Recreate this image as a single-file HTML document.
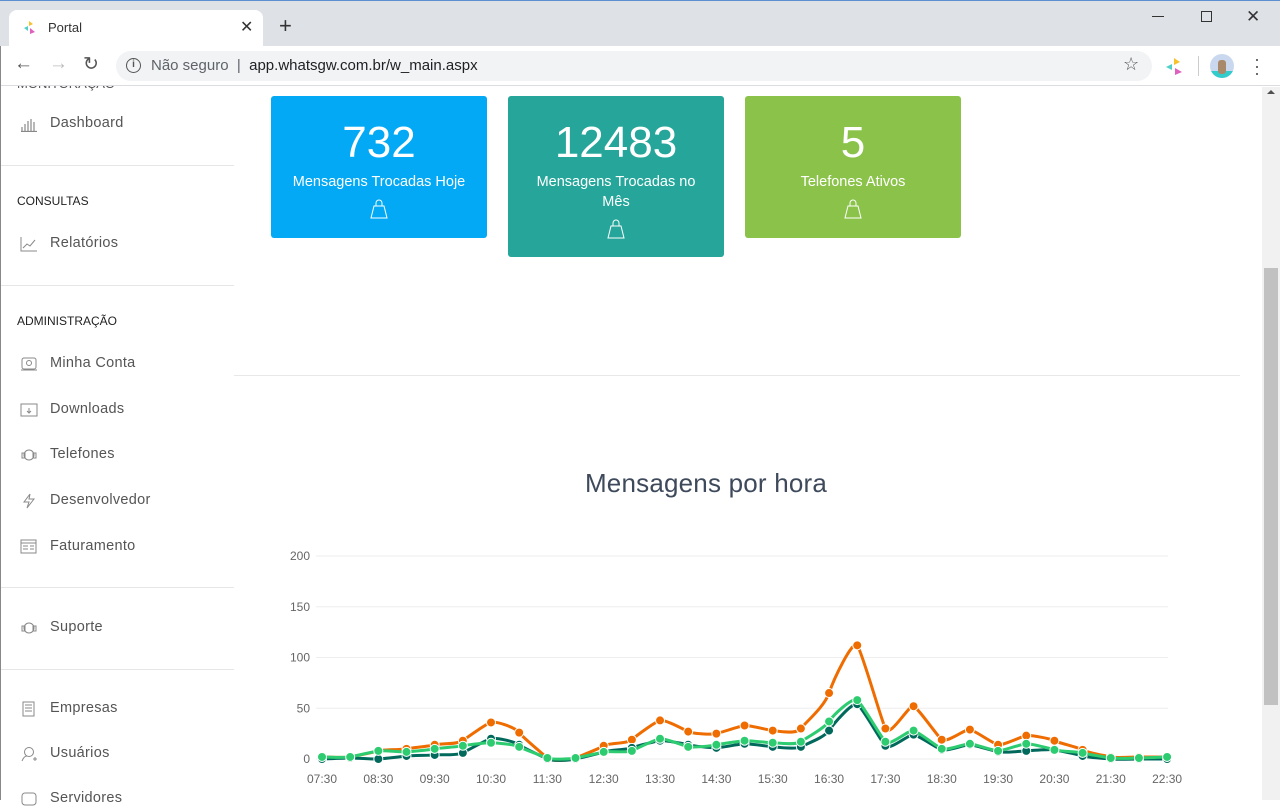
<!DOCTYPE html>
<html><head><meta charset="utf-8"><style>
*{box-sizing:border-box;margin:0;padding:0}
body{width:1280px;height:800px;overflow:hidden;font-family:"Liberation Sans",sans-serif;background:#fff;position:relative}
.abs{position:absolute}
.side a{position:absolute;left:50px;font-size:14.5px;color:#555;letter-spacing:0.3px}
.side .ic{position:absolute;left:20px;width:18px;height:16px}
.side h4{position:absolute;left:17px;font-size:12px;font-weight:normal;color:#222}
.side hr{position:absolute;left:0;width:234px;border:0;border-top:1px solid #e6e6e6}
.card{position:absolute;color:#fff;text-align:center;border-radius:3px}
.card .n{font-size:44px;margin-top:22px;line-height:50px}
.card .t{font-size:14.5px;line-height:20px;margin-top:4px}
.card svg{margin-top:6px}
</style></head><body>
<div class="side">
<svg class="ic" style="top:116px" width="18" height="16"><g stroke="#888" stroke-width="1.2"><path d="M2 15V11M5 15V8M8 15V5M11 15V3M14 15V6M1 15.5H17"/></g></svg>
<a style="top:115px">Dashboard</a>
<hr style="top:165px">
<h4 style="top:194px">CONSULTAS</h4>
<svg class="ic" style="top:236px" width="18" height="16"><path d="M1 1V15H17M3 12L7 8L10 10L15 4" stroke="#888" fill="none"/></svg>
<a style="top:235px">Relatórios</a>
<hr style="top:285px">
<h4 style="top:314px">ADMINISTRAÇÃO</h4>
<svg class="ic" style="top:356px" width="18" height="16"><rect x="2" y="2" width="14" height="11" rx="2" stroke="#888" fill="none"/><circle cx="9" cy="7" r="2.5" stroke="#888" fill="none"/><path d="M1 14H17" stroke="#888"/></svg>
<a style="top:355px">Minha Conta</a>
<svg class="ic" style="top:402px" width="18" height="16"><rect x="1" y="2" width="16" height="12" stroke="#888" fill="none"/><path d="M9 6V11M7 9L9 11L11 9" stroke="#888" fill="none"/></svg>
<a style="top:401px">Downloads</a>
<svg class="ic" style="top:447px" width="18" height="16"><circle cx="9" cy="8" r="5" stroke="#888" fill="none"/><rect x="2" y="6" width="3" height="5" stroke="#888" fill="none"/><rect x="13" y="6" width="3" height="5" stroke="#888" fill="none"/></svg>
<a style="top:446px">Telefones</a>
<svg class="ic" style="top:493px" width="18" height="16"><path d="M10 1L4 9H9L7 15L14 6H9Z" stroke="#888" fill="none"/></svg>
<a style="top:492px">Desenvolvedor</a>
<svg class="ic" style="top:539px" width="18" height="16"><rect x="1" y="1" width="15" height="13" stroke="#888" fill="none"/><path d="M1 4H16M3 7H8M10 7H14M3 10H8M10 10H14" stroke="#888"/></svg>
<a style="top:538px">Faturamento</a>
<hr style="top:587px">
<svg class="ic" style="top:620px" width="18" height="16"><circle cx="9" cy="8" r="5" stroke="#888" fill="none"/><rect x="2" y="6" width="3" height="5" stroke="#888" fill="none"/><rect x="13" y="6" width="3" height="5" stroke="#888" fill="none"/></svg>
<a style="top:619px">Suporte</a>
<hr style="top:669px">
<svg class="ic" style="top:701px" width="18" height="16"><rect x="3" y="1" width="11" height="14" stroke="#888" fill="none"/><path d="M5 4H12M5 7H12M5 10H12" stroke="#888"/></svg>
<a style="top:700px">Empresas</a>
<svg class="ic" style="top:746px" width="18" height="16"><circle cx="9" cy="6" r="4.5" stroke="#888" fill="none"/><path d="M2 15Q4 10 7 10M13 13H17M15 11V15" stroke="#888" fill="none"/></svg>
<a style="top:745px">Usuários</a>
<svg class="ic" style="top:792px" width="18" height="16"><rect x="2" y="1" width="14" height="12" rx="3" stroke="#888" fill="none"/></svg>
<a style="top:790px">Servidores</a>
</div>
<div class="abs" style="left:17px;top:76px;font-size:13px;color:#555">MONITORAÇÃO</div>
<div class="abs" style="left:0;top:0;width:1280px;height:46px;background:#dee1e6;border-top:1px solid #5b8fd1"></div>
<div class="abs" style="left:9px;top:10px;width:254px;height:36px;background:#fff;border-radius:8px 8px 0 0"></div>
<svg class="abs" style="left:22px;top:20px" width="16" height="16"><polygon points="7,1 11,4 7,6" fill="#f6c12b"/><polygon points="2,8 6,6 6,11" fill="#4fd0c8"/><polygon points="8,8 13,12 8,14" fill="#e060c0"/></svg>
<div class="abs" style="left:48px;top:20px;font-size:13px;color:#333">Portal</div>
<div class="abs" style="left:240px;top:17px;font-size:16px;color:#333">✕</div>
<div class="abs" style="left:279px;top:13px;font-size:22px;color:#333">+</div>
<div class="abs" style="left:1152px;top:16px;width:12px;border-top:1px solid #333"></div>
<div class="abs" style="left:1201px;top:11px;width:11px;height:11px;border:1px solid #333"></div>
<div class="abs" style="left:1246px;top:7px;font-size:17px;color:#333">✕</div>
<div class="abs" style="left:0;top:46px;width:1280px;height:40px;background:#fff;border-bottom:1px solid #dadce0"></div>
<div class="abs" style="left:14px;top:53px;font-size:19px;color:#555">←</div>
<div class="abs" style="left:49px;top:53px;font-size:19px;color:#bbb">→</div>
<div class="abs" style="left:83px;top:53px;font-size:19px;color:#555">↻</div>
<div class="abs" style="left:116px;top:51px;width:1036px;height:30px;background:#f1f3f4;border-radius:15px"></div>
<div class="abs" style="left:126px;top:58px;width:15px;height:15px;border:1.5px solid #555;border-radius:50%;font-size:10px;text-align:center;line-height:12px;color:#555;font-weight:bold">i</div>
<div class="abs" style="left:151px;top:57px;font-size:15px;color:#5f6368">Não seguro&nbsp;&nbsp;|&nbsp;&nbsp;<span style="color:#202124">app.whatsgw.com.br/w_main.aspx</span></div>
<div class="abs" style="left:1123px;top:54px;font-size:18px;color:#555">☆</div>
<svg class="abs" style="left:1165px;top:57px" width="20" height="20"><polygon points="9,1 15,5 9,8" fill="#f6c12b"/><polygon points="1,10 7,7 7,13" fill="#4fd0c8"/><polygon points="10,11 17,15 10,18" fill="#e060c0"/></svg>
<div class="abs" style="left:1198px;top:56px;height:20px;border-left:1px solid #ccc"></div>
<div class="abs" style="left:1210px;top:54px;width:24px;height:24px;border-radius:50%;background:#c9d8ee;overflow:hidden"><div style="position:absolute;bottom:0;width:24px;height:7px;background:#3cc"></div><div style="position:absolute;left:8px;top:6px;width:8px;height:14px;background:#a88a6a;border-radius:3px"></div></div>
<div class="abs" style="left:1254px;top:56px;font-size:18px;color:#555;line-height:7px">·<br>·<br>·</div>
<div class="abs" style="left:1262px;top:87px;width:18px;height:713px;background:#f1f1f1"></div>
<div class="abs" style="left:1264px;top:268px;width:14px;height:437px;background:#c1c1c1"></div>
<div class="abs" style="left:1267px;top:90px;width:0;height:0;border:4px solid transparent;border-bottom-color:#505050;border-top:0"></div>
<div class="abs" style="left:0;top:46px;width:1px;height:754px;background:#888"></div>
<div class="card" style="left:271px;top:96px;width:216px;height:142px;background:#03a9f4"><div class="n">732</div><div class="t">Mensagens Trocadas Hoje</div><svg width="20" height="22"><path d="M7 8V5a3 3 0 0 1 6 0V8M5 8H15L18 20H2Z" stroke="#fff" fill="none"/></svg></div>
<div class="card" style="left:508px;top:96px;width:216px;height:161px;background:#26a69a"><div class="n">12483</div><div class="t">Mensagens Trocadas no<br>Mês</div><svg width="20" height="22"><path d="M7 8V5a3 3 0 0 1 6 0V8M5 8H15L18 20H2Z" stroke="#fff" fill="none"/></svg></div>
<div class="card" style="left:745px;top:96px;width:216px;height:142px;background:#8bc34a"><div class="n">5</div><div class="t">Telefones Ativos</div><svg width="20" height="22"><path d="M7 8V5a3 3 0 0 1 6 0V8M5 8H15L18 20H2Z" stroke="#fff" fill="none"/></svg></div>
<div class="abs" style="left:234px;top:375px;width:1006px;border-top:1px solid #e8e8e8"></div>
<div class="abs" style="left:234px;top:468px;width:944px;text-align:center;font-size:26px;color:#3e4a5b;letter-spacing:0.2px">Mensagens por hora</div>
<svg id="ch" class="abs" style="left:0;top:0" width="1262" height="800"></svg>
<script>
var s=document.getElementById('ch'),h='';
var X=function(i){return 322+i*28.17},Y=function(v){return 759-v*1.015};
[0,50,100,150,200].forEach(function(v){h+='<line x1="316" x2="1168" y1="'+Y(v)+'" y2="'+Y(v)+'" stroke="#eee"/><text x="310" y="'+(Y(v)+4)+'" font-size="12" fill="#666" text-anchor="end" font-family="Liberation Sans">'+v+'</text>'});
var labs=['07:30','08:30','09:30','10:30','11:30','12:30','13:30','14:30','15:30','16:30','17:30','18:30','19:30','20:30','21:30','22:30'];
labs.forEach(function(l,k){h+='<text x="'+X(k*2)+'" y="783" font-size="12" fill="#666" text-anchor="middle" font-family="Liberation Sans">'+l+'</text>'});
var O=[2,2,8,10,14,18,36,26,1,1,13,19,38,27,25,33,28,30,65,112,30,52,19,29,14,23,18,9,2,2,2];
var D=[0,1,0,3,4,6,20,14,0,0,7,11,18,14,11,15,12,12,28,54,13,24,9,14,7,8,9,3,0,0,0];
var G=[2,2,8,7,10,13,16,12,1,1,7,8,20,12,14,18,16,17,37,58,17,28,10,15,8,15,9,6,1,1,2];
function line(a,c){var p='M'+X(0)+' '+Y(a[0]);for(var i=0;i<a.length-1;i++){var p0=a[Math.max(i-1,0)],p1=a[i],p2=a[i+1],p3=a[Math.min(i+2,a.length-1)];var x1=X(i),x2=X(i+1);p+=' C'+(x1+28.17/6)+' '+Y(p1+(p2-p0)/6)+' '+(x2-28.17/6)+' '+Y(p2-(p3-p1)/6)+' '+x2+' '+Y(p2)}
h+='<path d="'+p+'" stroke="'+c+'" stroke-width="3" fill="none"/>';a.forEach(function(v,i){h+='<circle cx="'+X(i)+'" cy="'+Y(v)+'" r="4.5" fill="'+c+'" stroke="#fff" stroke-width="1"/>'})}
line(O,'#ef6c00');line(D,'#00695c');line(G,'#2ecc71');
s.innerHTML=h;
</script>
</body></html>
